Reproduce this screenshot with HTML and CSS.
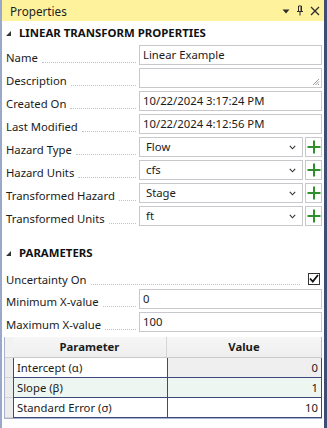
FILE: index.html
```html
<!DOCTYPE html>
<html>
<head>
<meta charset="utf-8">
<link rel="stylesheet" href="styles.css">
</head>
<body>
<div class="panel">
  <div class="titlebar">
    <span class="title">Properties</span>
    <div class="tb-icons">
      <svg width="8" height="8" viewBox="0 0 8 8"><path d="M0.5 2.5 L7.5 2.5 L4 6.5 Z" fill="#2d2d2d"/></svg>
      <svg width="8" height="11" viewBox="0 0 8 11"><path d="M2.5 1 V6 M5.5 1 V6 M2.5 1 H5.5 M1 6.5 H7 M4 6.5 V10.5 M5 1.5 V6" stroke="#2d2d2d" stroke-width="1" fill="none"/></svg>
      <svg width="10" height="10" viewBox="0 0 10 10"><path d="M1 1 L9 9 M9 1 L1 9" stroke="#2d2d2d" stroke-width="1.3"/></svg>
    </div>
  </div>
  <div class="content">
    <div class="section"><span class="tri"></span><span>LINEAR TRANSFORM PROPERTIES</span></div>

    <div class="row"><div class="label"><span>Name</span><i class="lead"></i></div><div class="field"><div class="box">Linear Example</div></div></div>
    <div class="row"><div class="label"><span>Description</span><i class="lead"></i></div><div class="field"><div class="box grip-box"><svg class="grip" width="8" height="8" viewBox="0 0 8 8"><path d="M7 1 L1 7 M7 3.5 L3.5 7 M7 6 L6 7" stroke="#9a9a9a" stroke-width="1"/></svg></div></div></div>
    <div class="row"><div class="label"><span>Created On</span><i class="lead"></i></div><div class="field"><div class="box">10/22/2024 3:17:24 PM</div></div></div>
    <div class="row"><div class="label"><span>Last Modified</span><i class="lead"></i></div><div class="field"><div class="box">10/22/2024 4:12:56 PM</div></div></div>

    <div class="row"><div class="label"><span>Hazard Type</span><i class="lead"></i></div><div class="field combo-field"><div class="box combo"><span>Flow</span><svg class="chev" width="7" height="5" viewBox="0 0 7 5"><path d="M0.8 0.8 L3.5 3.8 L6.2 0.8" stroke="#333" stroke-width="1.1" fill="none"/></svg></div><div class="plus"><svg width="14" height="14" viewBox="0 0 14 14"><path d="M7 0.5 V13.5 M0.5 7 H13.5" stroke="#2f8f2f" stroke-width="2"/></svg></div></div></div>
    <div class="row"><div class="label"><span>Hazard Units</span><i class="lead"></i></div><div class="field combo-field"><div class="box combo"><span>cfs</span><svg class="chev" width="7" height="5" viewBox="0 0 7 5"><path d="M0.8 0.8 L3.5 3.8 L6.2 0.8" stroke="#333" stroke-width="1.1" fill="none"/></svg></div><div class="plus"><svg width="14" height="14" viewBox="0 0 14 14"><path d="M7 0.5 V13.5 M0.5 7 H13.5" stroke="#2f8f2f" stroke-width="2"/></svg></div></div></div>
    <div class="row"><div class="label"><span>Transformed Hazard</span><i class="lead"></i></div><div class="field combo-field"><div class="box combo"><span>Stage</span><svg class="chev" width="7" height="5" viewBox="0 0 7 5"><path d="M0.8 0.8 L3.5 3.8 L6.2 0.8" stroke="#333" stroke-width="1.1" fill="none"/></svg></div><div class="plus"><svg width="14" height="14" viewBox="0 0 14 14"><path d="M7 0.5 V13.5 M0.5 7 H13.5" stroke="#2f8f2f" stroke-width="2"/></svg></div></div></div>
    <div class="row"><div class="label"><span>Transformed Units</span><i class="lead"></i></div><div class="field combo-field"><div class="box combo"><span>ft</span><svg class="chev" width="7" height="5" viewBox="0 0 7 5"><path d="M0.8 0.8 L3.5 3.8 L6.2 0.8" stroke="#333" stroke-width="1.1" fill="none"/></svg></div><div class="plus"><svg width="14" height="14" viewBox="0 0 14 14"><path d="M7 0.5 V13.5 M0.5 7 H13.5" stroke="#2f8f2f" stroke-width="2"/></svg></div></div></div>

    <div class="section section2"><span class="tri"></span><span>PARAMETERS</span></div>

    <div class="row check-row"><div class="label wide"><span>Uncertainty On</span><i class="lead"></i></div><div class="checkbox"><svg width="10" height="9" viewBox="0 0 10 9"><path d="M1 4.5 L3.8 7.5 L9 1" stroke="#111" stroke-width="1.8" fill="none"/></svg></div></div>
    <div class="row"><div class="label"><span>Minimum X-value</span><i class="lead"></i></div><div class="field"><div class="box">0</div></div></div>
    <div class="row"><div class="label"><span>Maximum X-value</span><i class="lead"></i></div><div class="field"><div class="box">100</div></div></div>

    <div class="grid">
      <div class="rh hdr"></div><div class="hcell">Parameter</div><div class="hcell last">Value</div>
      <div class="rh"></div><div class="cell">Intercept (α)</div><div class="cell num ro last">0</div>
      <div class="rh"></div><div class="cell alt">Slope (β)</div><div class="cell num alt last">1</div>
      <div class="rh"></div><div class="cell">Standard Error (σ)</div><div class="cell num last">10</div>
    </div>
  </div>
</div>
</body>
</html>
```

FILE: styles.css
```css
html, body {
  margin: 0;
  padding: 0;
  background: #ffffff;
}
body {
  font-family: "Noto Sans", "Open Sans", sans-serif;
  font-size: 11.3px;
  color: #1b1b1b;
}
.panel {
  width: 327px;
  height: 428px;
  box-sizing: border-box;
  border-left: 2px solid #9aa9c9;
  border-right: 3px solid #3f4d72;
  background: #ffffff;
  overflow: hidden;
}
.titlebar {
  height: 21px;
  background: #fff29d;
  display: flex;
  align-items: center;
  justify-content: space-between;
  padding: 0 4px 0 8px;
}
.title {
  font-size: 11.7px;
  color: #1e1e1e;
}
.tb-icons {
  display: flex;
  align-items: center;
  gap: 6px;
}
.content {
  padding: 0 2px 0 0;
}
.section {
  height: 23px;
  display: flex;
  align-items: center;
  font-weight: bold;
  font-size: 11.4px;
  color: #111;
  padding-left: 4px;
}
.section + .row {
  margin-top: 1px;
}
.section2 {
  margin-top: 15px;
  margin-bottom: 3px;
}
.tri {
  width: 0;
  height: 0;
  border-left: 5px solid transparent;
  border-bottom: 5px solid #333;
  margin-right: 8px;
  margin-top: 1px;
}
.row {
  display: grid;
  grid-template-columns: 137px 1fr;
  height: 20px;
  margin-bottom: 3px;
}
.label {
  display: flex;
  align-items: flex-end;
  padding-left: 4px;
  white-space: nowrap;
  line-height: 15px;
}
.lead {
  flex: 1;
  border-bottom: 1px dotted #c4c4c4;
  margin: 0 3px 2px 4px;
}
.field {
  display: flex;
  min-width: 0;
}
.box {
  flex: 1;
  box-sizing: border-box;
  height: 20px;
  border: 1px solid #c8c8cc;
  padding: 0 3px;
  display: flex;
  align-items: center;
  line-height: 18px;
  white-space: nowrap;
  background: #fff;
}
.grip-box {
  justify-content: flex-end;
  align-items: flex-end;
  padding: 0 1px 1px 0;
}
.combo-field {
  gap: 2px;
}
.combo {
  justify-content: space-between;
  padding-right: 6px;
}
.combo span {
  padding-left: 3px;
}
.chev {
  margin-top: 1px;
}
.plus {
  width: 17px;
  height: 20px;
  box-sizing: border-box;
  border: 1px solid #c8c8cc;
  display: flex;
  align-items: center;
  justify-content: center;
}
.check-row {
  grid-template-columns: 1fr 12px;
  padding-right: 2px;
  height: 20px;
  margin-bottom: 2px;
}
.label.wide .lead {
  margin-right: 8px;
}
.checkbox {
  width: 12px;
  height: 12px;
  box-sizing: border-box;
  border: 1px solid #333;
  align-self: center;
  margin-top: 3px;
  display: flex;
  align-items: center;
  justify-content: center;
}
.grid {
  margin: 5px 0 0 2px;
  display: grid;
  grid-template-columns: 8px 154px 1fr;
  border-left: 1px solid #a8b4cc;
  border-bottom: 1px solid #a8b4cc;
}
.rh {
  background: #ececec;
  border-bottom: 1px solid #d4d4d4;
  height: 20px;
  box-sizing: border-box;
}
.rh.hdr {
  background: #f2f2f2;
  height: 21px;
}
.hcell {
  height: 21px;
  box-sizing: border-box;
  background: linear-gradient(#f6f6f6, #eeeeee);
  border-right: 1px solid #d6d6d6;
  border-bottom: 1px solid #c9c9c9;
  font-weight: bold;
  text-align: center;
  line-height: 20px;
}
.hcell.last {
  border-right: 1px solid #a8b4cc;
}
.cell {
  height: 20px;
  box-sizing: border-box;
  border-left: 1px solid #3b4a7a;
  border-bottom: 1px solid #3b4a7a;
  padding: 0 3px;
  line-height: 19px;
  background: #fff;
  white-space: nowrap;
}
.cell.last {
  border-right: 1px solid #3b4a7a;
}
.cell.num {
  text-align: right;
}
.cell.ro {
  background: #efefef;
}
.cell.alt {
  background: #eef6f1;
}
```
